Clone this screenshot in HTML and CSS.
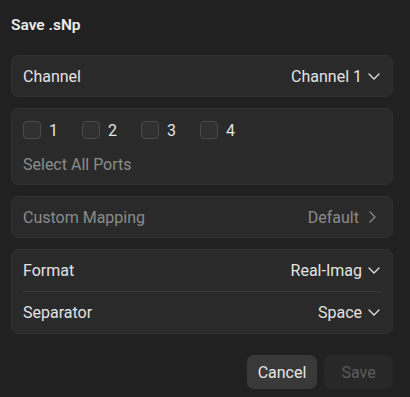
FILE: index.html
```html
<!DOCTYPE html>
<html>
<head>
<meta charset="utf-8">
<link rel="stylesheet" href="styles.css">
</head>
<body>
<div class="dialog">
  <h1 class="title">Save .sNp</h1>

  <div class="card row">
    <span class="label">Channel</span>
    <span class="value">Channel 1
      <svg class="chev" width="12" height="7" viewBox="0 0 12 7"><path d="M1 1l5 5 5-5" fill="none" stroke="currentColor" stroke-width="1.3" stroke-linecap="round" stroke-linejoin="round"/></svg>
    </span>
  </div>

  <div class="card ports">
    <div class="checks">
      <label class="check"><span class="box"></span><span>1</span></label>
      <label class="check"><span class="box"></span><span>2</span></label>
      <label class="check"><span class="box"></span><span>3</span></label>
      <label class="check"><span class="box"></span><span>4</span></label>
    </div>
    <div class="select-all">Select All Ports</div>
  </div>

  <div class="card row disabled">
    <span class="label">Custom Mapping</span>
    <span class="value">Default
      <svg class="chev-r" width="7" height="12" viewBox="0 0 7 12"><path d="M1 1l5 5-5 5" fill="none" stroke="currentColor" stroke-width="1.3" stroke-linecap="round" stroke-linejoin="round"/></svg>
    </span>
  </div>

  <div class="card group">
    <div class="row inner">
      <span class="label">Format</span>
      <span class="value">Real-Imag
        <svg class="chev" width="12" height="7" viewBox="0 0 12 7"><path d="M1 1l5 5 5-5" fill="none" stroke="currentColor" stroke-width="1.3" stroke-linecap="round" stroke-linejoin="round"/></svg>
      </span>
    </div>
    <div class="divider"></div>
    <div class="row inner">
      <span class="label">Separator</span>
      <span class="value">Space
        <svg class="chev" width="12" height="7" viewBox="0 0 12 7"><path d="M1 1l5 5 5-5" fill="none" stroke="currentColor" stroke-width="1.3" stroke-linecap="round" stroke-linejoin="round"/></svg>
      </span>
    </div>
  </div>

  <div class="actions">
    <button class="btn cancel">Cancel</button>
    <button class="btn save">Save</button>
  </div>
</div>
</body>
</html>
```

FILE: styles.css
```css
html, body {
  margin: 0;
  padding: 0;
  background: #212121;
}
body {
  font-family: Roboto, "Noto Sans", sans-serif;
  color: #e3e3e3;
  font-size: 16px;
}
.dialog {
  width: 382px;
  padding: 0 17px 0 11px;
}
.title {
  margin: 15px 0 20px;
  font-size: 15.5px;
  font-weight: 600;
  line-height: 20px;
  color: #ececec;
}
.card {
  background: #2a2a2a;
  border: 1px solid #303030;
  border-radius: 7px;
  margin-bottom: 11px;
  box-sizing: border-box;
  padding: 0 11px;
}
.row {
  display: flex;
  align-items: center;
  justify-content: space-between;
  height: 42px;
}
.card.row { height: 42px; }
.value {
  display: flex;
  align-items: center;
  gap: 6px;
}
.chev { margin-right: 1px; }
.chev-r { margin: 0 5px 0 4px; }
.disabled .label, .disabled .value { color: #8a8a8a; }
.ports {
  padding-top: 12px;
  padding-bottom: 9px;
}
.checks {
  display: flex;
  gap: 24px;
  height: 18px;
  align-items: center;
}
.check {
  display: flex;
  align-items: center;
  gap: 8px;
}
.box {
  width: 16px;
  height: 16px;
  border: 1px solid #4a4a4a;
  background: #303030;
  border-radius: 4px;
}
.select-all {
  margin-top: 16px;
  line-height: 20px;
  color: #8c8c8c;
}
.group { padding: 0 11px; }
.row.inner { height: 41px; }
.divider {
  height: 1px;
  background: #383838;
}
.actions {
  display: flex;
  justify-content: flex-end;
  gap: 7px;
  margin-top: 21px;
}
.btn {
  font-family: Roboto, "Noto Sans", sans-serif;
  font-size: 16px;
  height: 34px;
  border: none;
  border-radius: 7px;
  padding: 0;
}
.cancel {
  width: 70px;
  background: #393939;
  color: #e6e6e6;
}
.save {
  width: 69px;
  background: #282828;
  color: #5c5c5c;
}
```
